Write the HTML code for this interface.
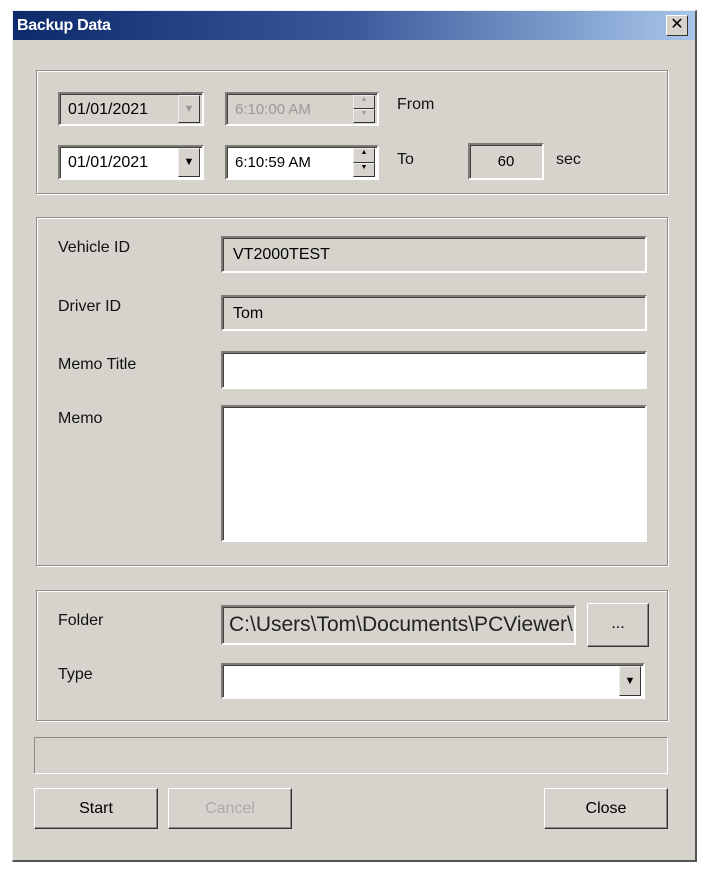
<!DOCTYPE html>
<html><head><style>
*{box-sizing:border-box;margin:0;padding:0}
body{width:712px;height:877px;background:#fff;position:relative;font-family:"Liberation Sans",sans-serif;overflow:hidden}
.a{position:absolute}
.win{left:12px;top:10px;width:685px;height:852px;background:#d6d3cd;border-right:2px solid #555;border-bottom:2px solid #555;border-left:1px solid #eee;border-top:1px solid #eee}
.title{left:13px;top:11px;width:682px;height:29px;background:linear-gradient(90deg,#0d2a6b,#3a5a9c 50%,#a8c6ea);color:#fff;font-weight:bold;font-size:16px;padding:6px 4px;letter-spacing:-0.3px}
.x{left:666px;top:15px;width:22px;height:21px;background:#d6d3cd;border:1px solid;border-color:#fff #333 #333 #fff;font:16px "Liberation Sans";text-align:center;line-height:18px;color:#000}
.grp{border:1px solid #8f8c86;box-shadow:inset 1px 1px 0 #fff,1px 1px 0 #fff}
.in{border:2px solid;border-color:#7d7a75 #fff #fff #7d7a75;box-shadow:inset 1px 1px 0 #404040;font-size:16px;padding:7px 8px;color:#000}
.w{background:#fff}
.g{background:#d6d3cd}
.btn{border:1px solid;border-color:#fff #333 #333 #fff;box-shadow:inset -1px -1px 0 #888;background:#d6d3cd;font-size:16px;text-align:center}
.lbl{font-size:16px;color:#111}
.dd{width:22px;border:1px solid;border-color:#eee #333 #333 #eee;background:#d6d3cd;font-size:11px;text-align:center}
</style></head><body>
<div class="a win"></div>
<div class="a title">Backup Data</div>
<div class="a x">✕</div>

<div class="a grp" style="left:36px;top:70px;width:632px;height:124px"></div>
<div class="a in g" style="left:58px;top:92px;width:146px;height:34px">01/01/2021</div>
<div class="a dd" style="left:178px;top:95px;height:28px;color:#999;line-height:26px">▼</div>
<div class="a in g" style="left:225px;top:92px;width:154px;height:34px;color:#999;font-size:15px">6:10:00 AM</div>
<div class="a dd" style="left:353px;top:95px;height:14px;font-size:7px;color:#999">▲</div>
<div class="a dd" style="left:353px;top:109px;height:14px;font-size:7px;color:#999">▼</div>
<div class="a lbl" style="left:397px;top:96px">From</div>
<div class="a in w" style="left:58px;top:145px;width:146px;height:35px">01/01/2021</div>
<div class="a dd" style="left:178px;top:148px;height:29px;line-height:27px">▼</div>
<div class="a in w" style="left:225px;top:145px;width:154px;height:35px;font-size:15px">6:10:59 AM</div>
<div class="a dd" style="left:353px;top:148px;height:15px;font-size:7px">▲</div>
<div class="a dd" style="left:353px;top:163px;height:14px;font-size:7px">▼</div>
<div class="a lbl" style="left:397px;top:151px">To</div>
<div class="a in g" style="left:468px;top:143px;width:76px;height:37px;text-align:center;padding-top:8px;font-size:15px">60</div>
<div class="a lbl" style="left:556px;top:151px">sec</div>

<div class="a grp" style="left:36px;top:217px;width:632px;height:349px"></div>
<div class="a lbl" style="left:58px;top:239px">Vehicle ID</div>
<div class="a in g" style="left:221px;top:236px;width:426px;height:37px;padding:8px 10px">VT2000TEST</div>
<div class="a lbl" style="left:58px;top:298px">Driver ID</div>
<div class="a in g" style="left:221px;top:295px;width:426px;height:36px;padding:8px 10px">Tom</div>
<div class="a lbl" style="left:58px;top:356px">Memo Title</div>
<div class="a in w" style="left:221px;top:351px;width:426px;height:38px"></div>
<div class="a lbl" style="left:58px;top:410px">Memo</div>
<div class="a in w" style="left:221px;top:405px;width:426px;height:137px"></div>

<div class="a grp" style="left:36px;top:590px;width:632px;height:131px"></div>
<div class="a lbl" style="left:58px;top:612px">Folder</div>
<div class="a in g" style="left:221px;top:605px;width:355px;height:40px;font-size:21px;padding:6px 6px;white-space:nowrap;overflow:hidden;color:#222">C:\Users\Tom\Documents\PCViewer\</div>
<div class="a btn" style="left:587px;top:603px;width:62px;height:44px;line-height:40px">...</div>
<div class="a lbl" style="left:58px;top:666px">Type</div>
<div class="a in w" style="left:221px;top:663px;width:424px;height:36px"></div>
<div class="a dd" style="left:619px;top:666px;height:30px;line-height:28px">▼</div>

<div class="a" style="left:34px;top:737px;width:634px;height:37px;border:1px solid;border-color:#8f8c86 #fff #fff #8f8c86"></div>
<div class="a btn" style="left:34px;top:788px;width:124px;height:41px;line-height:40px">Start</div>
<div class="a btn" style="left:168px;top:788px;width:124px;height:41px;line-height:40px;color:#aaa">Cancel</div>
<div class="a btn" style="left:544px;top:788px;width:124px;height:41px;line-height:40px">Close</div>
</body></html>
